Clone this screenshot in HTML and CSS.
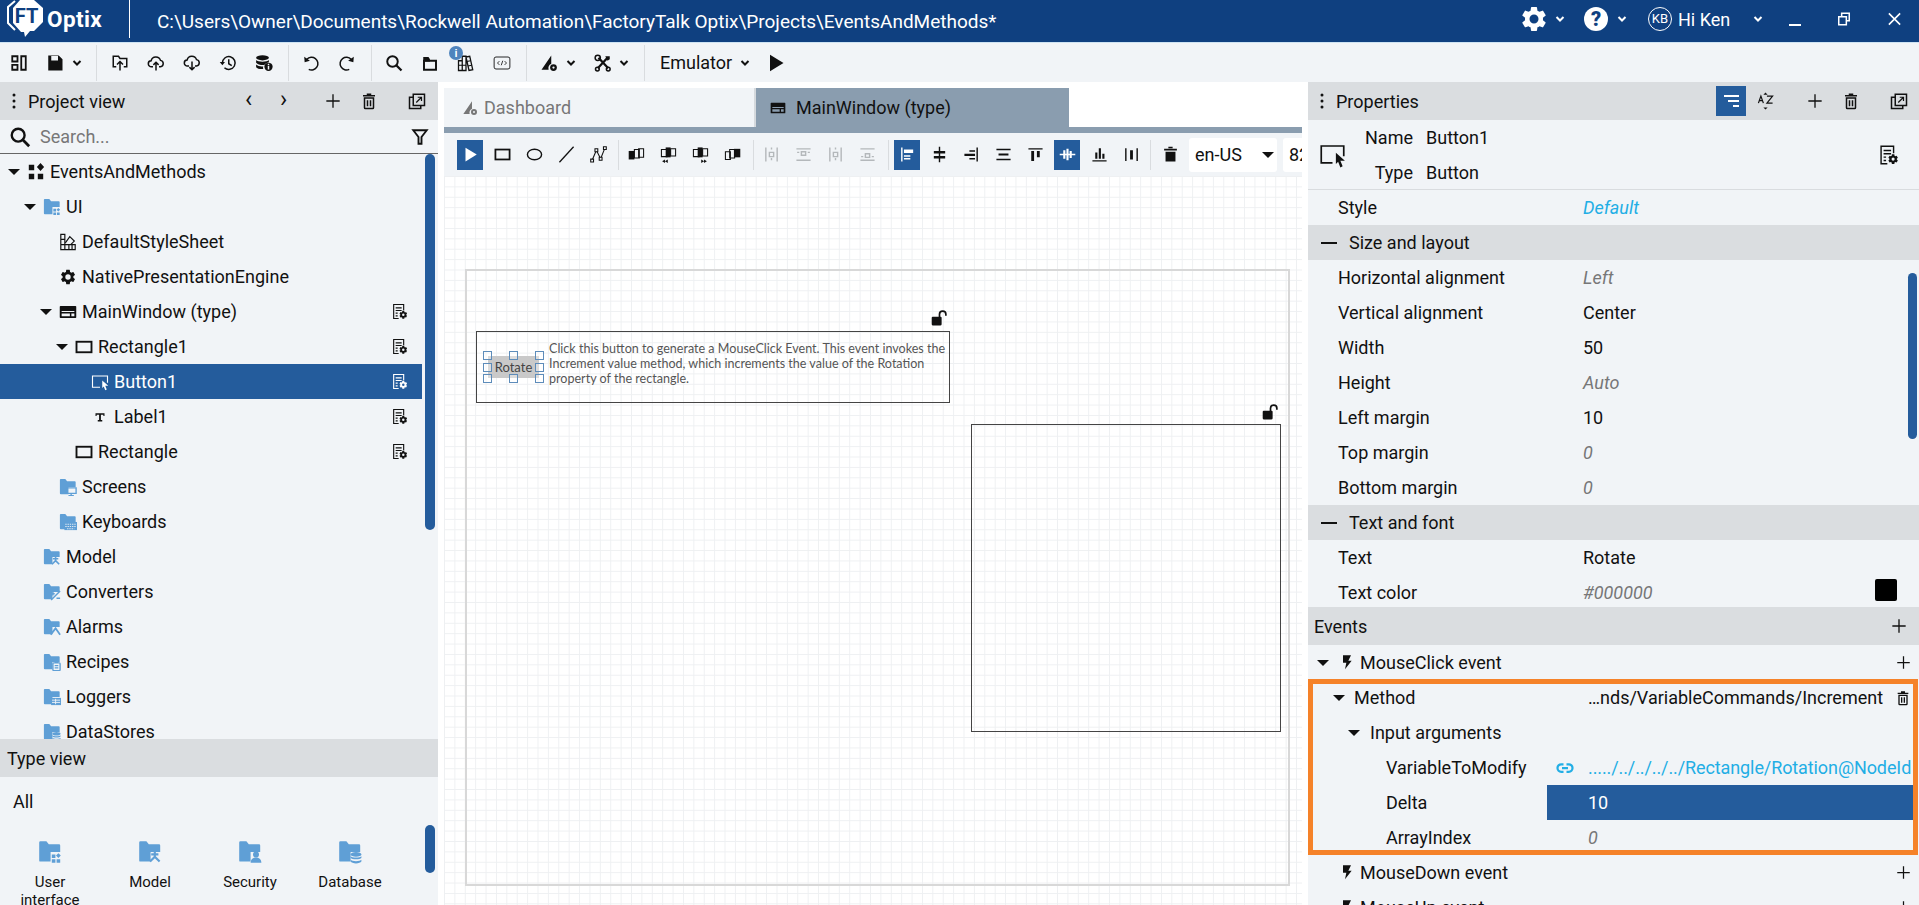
FILE: index.html
```html
<!DOCTYPE html>
<html lang="en">

<head>
    <meta charset="UTF-8">
    <meta name="viewport" content="width=device-width, initial-scale=1.0">
    <title>FactoryTalk Optix</title>
    <link rel="stylesheet" href="styles.css">
</head>

<body>
    <!-- Icon set -->
    <svg class="sprite" xmlns="http://www.w3.org/2000/svg">
        <symbol id="i-chev" viewBox="0 0 12 12"><path d="M2.5 4l3.5 3.5L9.5 4" fill="none" stroke="currentColor" stroke-width="2"/></symbol>
        <symbol id="i-gear" viewBox="0 0 24 24"><path fill="currentColor" fill-rule="evenodd" d="M19.14 12.94c.04-.3.06-.61.06-.94 0-.32-.02-.64-.07-.94l2.03-1.58a.49.49 0 0 0 .12-.61l-1.92-3.32a.488.488 0 0 0-.59-.22l-2.39.96c-.5-.38-1.03-.7-1.62-.94l-.36-2.54a.484.484 0 0 0-.48-.41h-3.84c-.24 0-.43.17-.47.41l-.36 2.54c-.59.24-1.13.57-1.62.94l-2.39-.96c-.22-.08-.47 0-.59.22L2.74 8.87c-.12.21-.08.47.12.61l2.03 1.58c-.05.3-.09.63-.09.94s.02.64.07.94l-2.03 1.58a.49.49 0 0 0-.12.61l1.92 3.32c.12.22.37.29.59.22l2.39-.96c.5.38 1.03.7 1.62.94l.36 2.54c.05.24.24.41.48.41h3.84c.24 0 .44-.17.47-.41l.36-2.54c.59-.24 1.13-.56 1.62-.94l2.39.96c.22.08.47 0 .59-.22l1.92-3.32c.12-.22.07-.47-.12-.61l-2.01-1.58zM12 15.6A3.6 3.6 0 1 1 12 8.4a3.6 3.6 0 0 1 0 7.2z"/></symbol>
        <symbol id="i-layout" viewBox="0 0 24 24"><path fill="none" stroke="currentColor" stroke-width="2.4" d="M3 3h7v7H3zM3 14.5h7V21H3zM15 3h6v18h-6z"/></symbol>
        <symbol id="i-save" viewBox="0 0 24 24"><path fill="currentColor" fill-rule="evenodd" d="M3 2h14l5 5v15H3zM7 2.500v6h9v-6z"/></symbol>
        <symbol id="i-folderup" viewBox="0 0 24 24"><path fill="none" stroke="currentColor" stroke-width="2" d="M7 17H3V3h7l2 3h9v11h-4"/><path fill="none" stroke="currentColor" stroke-width="2" d="M12 22V10M8 14l4-4 4 4"/></symbol>
        <symbol id="i-cloudup" viewBox="0 0 24 24"><path fill="none" stroke="currentColor" stroke-width="2" d="M8 17H6a4 4 0 0 1-.5-8A6.500 6.500 0 0 1 18 8.500a4.300 4.300 0 0 1 0 8.500h-2"/><path fill="none" stroke="currentColor" stroke-width="2" d="M12 22V11M8.500 14.500L12 11l3.500 3.500"/></symbol>
        <symbol id="i-clouddown" viewBox="0 0 24 24"><path fill="none" stroke="currentColor" stroke-width="2" d="M8 16H6a4 4 0 0 1-.5-8A6.500 6.500 0 0 1 18 7.500a4.300 4.300 0 0 1 0 8.500h-2"/><path fill="none" stroke="currentColor" stroke-width="2" d="M12 10v11M8.500 17.500L12 21l3.500-3.500"/></symbol>
        <symbol id="i-history" viewBox="0 0 24 24"><path fill="none" stroke="currentColor" stroke-width="2" d="M4.500 12a8.500 8.500 0 1 1 2.800 6.300M13 7v6l4 2.500"/><path fill="currentColor" d="M1 10.500h7L4.500 15z"/></symbol>
        <symbol id="i-dbinfo" viewBox="0 0 24 24"><ellipse cx="10" cy="5" rx="8.500" ry="3.500" fill="currentColor"/><path fill="currentColor" d="M1.500 8c2 3 15 3 17 0v3c-3 1-5 2-6 3.500-4 .5-9-.5-11-3zM1.500 14c2 2 6 3 9.500 2.500-.5 1-.5 2.500 0 3.500-4 .500-8-.5-9.500-2.500z"/><circle cx="18" cy="17" r="5.500" fill="currentColor"/><path stroke="#f1f4f7" stroke-width="2" d="M18 16v4.500M18 13v2"/></symbol>
        <symbol id="i-undo" viewBox="0 0 24 24"><path fill="none" stroke="currentColor" stroke-width="2" d="M6.500 7A8.500 8.500 0 1 1 9 20.500"/><path fill="currentColor" d="M3 3.500l.5 7.500 7-2z"/></symbol>
        <symbol id="i-redo" viewBox="0 0 24 24"><path fill="none" stroke="currentColor" stroke-width="2" d="M17.500 7A8.500 8.500 0 1 0 15 20.500"/><path fill="currentColor" d="M21 3.500l-.5 7.500-7-2z"/></symbol>
        <symbol id="i-search" viewBox="0 0 24 24"><circle cx="10" cy="10" r="7" fill="none" stroke="currentColor" stroke-width="2.600"/><path d="M15 15l7 7" stroke="currentColor" stroke-width="3"/></symbol>
        <symbol id="i-folder" viewBox="0 0 24 24"><path fill="none" stroke="currentColor" stroke-width="2.600" d="M4 21V9h16v12z"/><path fill="currentColor" d="M3 10V4h7l2 3v3z"/></symbol>
        <symbol id="i-books" viewBox="0 0 24 24"><path fill="none" stroke="currentColor" stroke-width="1.700" d="M2 9h5v13H2zM7 3h5v19H7zM12 4l5-1 4 18-5 1z"/><path stroke="currentColor" stroke-width="1.500" d="M2 15h10M13 10l5-1M14.500 16l5-1"/></symbol>
        <symbol id="i-code" viewBox="0 0 24 24"><rect x="1.500" y="4" width="21" height="16" rx="2.500" fill="none" stroke="currentColor" stroke-width="1.200"/><path fill="none" stroke="currentColor" stroke-width="1.100" d="M8.500 9.500L6 12l2.500 2.500M15.500 9.500L18 12l-2.500 2.500M13 9l-2 6"/></symbol>
        <symbol id="i-dash" viewBox="0 0 24 24"><path fill="currentColor" d="M15 2v11a7 7 0 0 0-3.500 8H2z"/><circle cx="18" cy="18" r="4.500" fill="currentColor"/><circle cx="18" cy="18" r="1.500" fill="#f1f4f7"/></symbol>
        <symbol id="i-tools" viewBox="0 0 24 24"><path stroke="currentColor" stroke-width="3" d="M6 5l13 14M18 5L5 19"/><circle cx="5" cy="5" r="3.500" fill="none" stroke="currentColor" stroke-width="2"/><circle cx="19" cy="20" r="2.500" fill="none" stroke="currentColor" stroke-width="2"/><circle cx="4.500" cy="20" r="2.500" fill="none" stroke="currentColor" stroke-width="2"/><path fill="currentColor" d="M15 3h6v4l-3 2z"/></symbol>
        <symbol id="i-play" viewBox="0 0 24 24"><path fill="currentColor" d="M4 1l18 11L4 23z"/></symbol>
        <symbol id="i-dots" viewBox="0 0 6 24"><g fill="currentColor"><circle cx="3" cy="4" r="2"/><circle cx="3" cy="12" r="2"/><circle cx="3" cy="20" r="2"/></g></symbol>
        <symbol id="i-plus" viewBox="0 0 24 24"><path stroke="currentColor" stroke-width="2" d="M12 2v20M2 12h20"/></symbol>
        <symbol id="i-trash" viewBox="0 0 24 24"><path fill="none" stroke="currentColor" stroke-width="2" d="M6 8h12v13a1 1 0 0 1-1 1H7a1 1 0 0 1-1-1z"/><path stroke="currentColor" stroke-width="2" d="M4 5h16M9 3h6M10 11v8M14 11v8"/></symbol>
        <symbol id="i-bin" viewBox="0 0 24 24"><path fill="currentColor" d="M5 8h14v14H5zM3 4h18v2.500H3zM9 1h6v2H9z"/></symbol>
        <symbol id="i-copy" viewBox="0 0 24 24"><path fill="none" stroke="currentColor" stroke-width="2" d="M7 3h15v15H7zM7 7H2v15h15v-4"/><path fill="none" stroke="currentColor" stroke-width="1.600" d="M11 14l7-7M13 7h5v5"/></symbol>
        <symbol id="i-docgear" viewBox="0 0 24 24"><path fill="none" stroke="currentColor" stroke-width="1.700" d="M10 22.500H2.500V1.500h15V10"/><path stroke="currentColor" stroke-width="1.700" d="M5.500 6.500h9M5.500 10.500h9M5.500 14.500h3M5.500 18.500h3"/><g transform="translate(9.500 9.500) scale(.62)"><path fill="currentColor" fill-rule="evenodd" d="M19.140 12.940c.04-.3.06-.61.06-.94 0-.32-.02-.64-.07-.94l2.030-1.580-2.400-4.150-2.390.96c-.5-.38-1.030-.7-1.620-.94l-.36-2.950H9.600l-.36 2.950c-.59.24-1.130.57-1.620.94l-2.390-.96-2.400 4.150 2.030 1.580c-.05.3-.09.63-.09.94s.02.64.07.94l-2.030 1.580 2.400 4.150 2.390-.96c.5.38 1.030.7 1.620.94l.36 2.950h4.800l.36-2.950c.59-.24 1.130-.56 1.620-.94l2.390.96 2.400-4.150zM12 15a3 3 0 1 1 0-6 3 3 0 0 1 0 6z"/></g></symbol>
        <symbol id="i-project" viewBox="0 0 20 20"><path fill="currentColor" d="M2 2h6v6H2zM2 12h6v6H2zM12 12h6v6h-6zM15 0l4 4.500-4 4.500-4-4.500z"/></symbol>
        <symbol id="i-sheet" viewBox="0 0 20 20"><path fill="none" stroke="currentColor" stroke-width="1.300" d="M2 1.500h4.500v17H2zM2 7h4.500M2 13h16v5.500H2zM11 13v5.500M14.500 13v5.500"/><path fill="none" stroke="currentColor" stroke-width="1.300" d="M7 11l5-7 5 5-4 4"/></symbol>
        <symbol id="i-window" viewBox="0 0 24 24"><path fill="currentColor" fill-rule="evenodd" d="M1 5a1 1 0 0 1 1-1h20a1 1 0 0 1 1 1v14a1 1 0 0 1-1 1H2a1 1 0 0 1-1-1zM3.500 10.500V12h17v-1.500zM3.500 14v3.500h11V14zM16.500 14v3.500h4V14z"/></symbol>
        <symbol id="i-rect" viewBox="0 0 24 24"><rect x="2" y="5" width="20" height="14" fill="none" stroke="currentColor" stroke-width="2.500"/></symbol>
        <symbol id="i-button" viewBox="0 0 24 24"><path fill="none" stroke="currentColor" stroke-width="1.500" d="M12 19H2V4h20v9"/><path fill="currentColor" d="M15 10l8 7h-4l2 5-2 1-2-5-2 2z"/></symbol>
        <symbol id="i-t" viewBox="0 0 24 24"><path fill="currentColor" d="M6 7h12v3.500h-1.500V9h-3.300v7H15v2H9v-2h1.800V9H7.500v1.500H6z"/></symbol>
        <symbol id="i-caret" viewBox="0 0 12 6"><path fill="currentColor" d="M0 0h12L6 6z"/></symbol>
        <symbol id="i-funnel" viewBox="0 0 24 24"><path fill="none" stroke="currentColor" stroke-width="2.500" d="M3 3h18l-7 9v9h-4v-9z"/></symbol>
        <symbol id="i-az" viewBox="0 0 24 24"><path fill="none" stroke="currentColor" stroke-width="1.700" d="M2 15l3.500-10L9 15M3.200 11.500h4.600M14 5h8l-8 10h8"/><path fill="currentColor" d="M12 0l3 3H9zM12 24l-3-3h6z"/></symbol>
        <symbol id="i-ellipse" viewBox="0 0 24 24"><ellipse cx="12" cy="12" rx="10" ry="7.500" fill="none" stroke="currentColor" stroke-width="2"/></symbol>
        <symbol id="i-line" viewBox="0 0 24 24"><path stroke="currentColor" stroke-width="1.800" d="M2 23L22 1"/></symbol>
        <symbol id="i-poly" viewBox="0 0 24 24"><path fill="none" stroke="currentColor" stroke-width="1.500" d="M3 20L9 6l6 12 6-15"/><path fill="#f1f4f7" stroke="currentColor" stroke-width="1.500" d="M1 18.500h4v4H1zM7 4h4v4H7zM13 16h4v4h-4zM19 1h4v4h-4z"/></symbol>
        <symbol id="i-arrange" viewBox="0 0 24 24"><path fill="currentColor" d="M1 7h8v12H1z"/><path fill="none" stroke="currentColor" stroke-width="1.500" d="M9 5h7v12H9zM15 4h7v12h-7z"/></symbol>
        <symbol id="i-arrangeb" viewBox="0 0 24 24"><path fill="none" stroke="currentColor" stroke-width="1.500" d="M2 5h8v10H2z"/><path fill="currentColor" d="M8 2h7v14H8z"/><path fill="none" stroke="currentColor" stroke-width="1.500" d="M15 4h7v10h-7z"/><path fill="currentColor" d="M11 19v5l-4-2.500zM7 19v5l-4-2.500z"/></symbol>
        <symbol id="i-arrangef" viewBox="0 0 24 24"><path fill="none" stroke="currentColor" stroke-width="1.500" d="M2 5h8v10H2z"/><path fill="currentColor" d="M8 2h7v14H8z"/><path fill="none" stroke="currentColor" stroke-width="1.500" d="M15 4h7v10h-7z"/><path fill="currentColor" d="M13 19v5l4-2.500zM17 19v5l4-2.500z"/></symbol>
        <symbol id="i-arrangel" viewBox="0 0 24 24"><path fill="none" stroke="currentColor" stroke-width="1.500" d="M2 8h7v11H2zM8 5h7v12H8z"/><path fill="currentColor" d="M14 4h9v12h-9z"/></symbol>
        <symbol id="i-dista" viewBox="0 0 24 24"><path fill="currentColor" d="M3 2h2v20H3zM19 2h2v20h-2z"/><path fill="none" stroke="currentColor" stroke-width="2" d="M9 9h6v6H9z"/><path stroke="currentColor" stroke-width="2" stroke-dasharray="3 2" d="M12 2v5M12 17v5"/></symbol>
        <symbol id="i-distb" viewBox="0 0 24 24"><path fill="currentColor" d="M2 3h20v2H2zM2 19h20v2H2z"/><path fill="none" stroke="currentColor" stroke-width="2" d="M9 8h6v5H9z"/><path stroke="currentColor" stroke-width="2" d="M3 9h3M18 9h3"/></symbol>
        <symbol id="i-distd" viewBox="0 0 24 24"><path fill="currentColor" d="M2 19h20v2H2zM2 3h20v2H2z"/><path fill="none" stroke="currentColor" stroke-width="2" d="M9 11h6v5H9z"/><path stroke="currentColor" stroke-width="2" d="M3 15h3M18 15h3"/></symbol>
        <symbol id="i-alleft" viewBox="0 0 24 24"><path fill="currentColor" d="M3 2h2v20H3zM7 5h13v5H7zM7 13h9v2H7zM7 17h9v2H7z"/></symbol>
        <symbol id="i-alcenter" viewBox="0 0 24 24"><path fill="currentColor" d="M11 1h2v22h-2zM4 7h16v3.500H4zM4 14h16v3.500H4z"/></symbol>
        <symbol id="i-alright" viewBox="0 0 24 24"><path fill="currentColor" d="M19 2h2v20h-2zM9 6h8v2H9zM2 11h15v3H2zM9 17h8v2H9z"/></symbol>
        <symbol id="i-almid" viewBox="0 0 24 24"><path fill="currentColor" d="M2 4h20v2H2zM2 18h20v2H2zM5 10.500h14v3H5z"/></symbol>
        <symbol id="i-altop" viewBox="0 0 24 24"><path fill="currentColor" d="M2 3h20v2H2zM6 7h4v14H6zM14 7h4v9h-4z"/></symbol>
        <symbol id="i-alvcenter" viewBox="0 0 24 24"><path fill="currentColor" d="M1 11h22v2H1zM6 6h3v12H6zM10.500 4h3v16h-3zM15 7h3v10h-3z"/></symbol>
        <symbol id="i-albottom" viewBox="0 0 24 24"><path fill="currentColor" d="M2 20h20v2H2zM6 9h3v9H6zM11 3h3v15h-3zM16 11h3v7h-3z"/></symbol>
        <symbol id="i-alsides" viewBox="0 0 24 24"><path fill="currentColor" d="M3 3h2v18H3zM19 3h2v18h-2zM10 6h4v13h-4z"/></symbol>
        <symbol id="i-lock" viewBox="0 0 24 24"><path fill="currentColor" d="M1 11a1.500 1.500 0 0 1 1.500-1.500h11a1.500 1.500 0 0 1 1.500 1.500v9a2 2 0 0 1-2 2H3a2 2 0 0 1-2-2z"/><path fill="none" stroke="currentColor" stroke-width="2.400" d="M12 10V6a4.500 4.500 0 0 1 9 0v2"/></symbol>
        <symbol id="i-bolt" viewBox="0 0 24 24"><path fill="currentColor" d="M6 2h12l-4 8h5L9 23l2-10H6z"/></symbol>
        <symbol id="i-link" viewBox="0 0 24 24"><path fill="none" stroke="currentColor" stroke-width="3" d="M10 7H7a5 5 0 0 0 0 10h3M14 7h3a5 5 0 0 1 0 10h-3M8 12h8"/></symbol>
        <symbol id="i-restore" viewBox="0 0 24 24"><path fill="none" stroke="currentColor" stroke-width="2.600" d="M8 7V2h13v13h-5M3 8h13v14H3z"/></symbol>
        <symbol id="i-close" viewBox="0 0 24 24"><path stroke="currentColor" stroke-width="2.600" d="M3 3l18 18M21 3L3 21"/></symbol>
        <symbol id="i-fbase" viewBox="0 0 20 20"><path fill="#5f9fd6" d="M1 2a1 1 0 0 1 1-1h5l2 2.500h8.500a1 1 0 0 1 1 1V10h-8v8H2a1 1 0 0 1-1-1z"/></symbol>
        <symbol id="f-ui" viewBox="0 0 20 20"><use href="#i-fbase"/><path fill="#5f9fd6" d="M11.500 12h3v3h-3zM11.500 16h3v3h-3zM15.500 16h3v3h-3zM17 11l2 2-2 2-2-2z"/></symbol>
        <symbol id="f-screen" viewBox="0 0 20 20"><use href="#i-fbase"/><path fill="none" stroke="#5f9fd6" stroke-width="1.500" d="M8 11h11v6H8z"/><path stroke="#5f9fd6" stroke-width="1.500" d="M13.500 17v2M10.500 19.500h6"/></symbol>
        <symbol id="f-kbd" viewBox="0 0 20 20"><use href="#i-fbase"/><rect x="6" y="10" width="14" height="9" fill="#5f9fd6"/><path stroke="#f1f4f7" stroke-width="1" stroke-dasharray="1.500 1" d="M7 12.500h12M7 15h12M9 17.500h8"/></symbol>
        <symbol id="f-model" viewBox="0 0 20 20"><use href="#i-fbase"/><path fill="none" stroke="#5f9fd6" stroke-width="1.800" d="M14 9v5l-4 4M14 14l4 4M11 12h6"/></symbol>
        <symbol id="f-conv" viewBox="0 0 20 20"><use href="#i-fbase"/><path stroke="#5f9fd6" stroke-width="1.600" d="M9 19l10-10M9 12h4M11 10v4M15 17h4"/></symbol>
        <symbol id="f-alarm" viewBox="0 0 20 20"><use href="#i-fbase"/><path fill="none" stroke="#5f9fd6" stroke-width="2" d="M8.500 18.500l5.500-7 5 7"/></symbol>
        <symbol id="f-recipe" viewBox="0 0 20 20"><use href="#i-fbase"/><rect x="11" y="11" width="8" height="8.500" rx="1" fill="none" stroke="#5f9fd6" stroke-width="1.500"/><path stroke="#5f9fd6" stroke-width="1.200" d="M13 14h4M13 16.500h4M13 10.500h4"/></symbol>
        <symbol id="f-log" viewBox="0 0 20 20"><use href="#i-fbase"/><rect x="9" y="11" width="11" height="8" fill="#5f9fd6"/><path stroke="#f1f4f7" stroke-width="1" d="M10 13.500h9M10 16h9M14 12v6"/></symbol>
        <symbol id="f-db" viewBox="0 0 20 20"><use href="#i-fbase"/><ellipse cx="15" cy="12" rx="4.500" ry="2" fill="#5f9fd6"/><path fill="#5f9fd6" d="M10.500 13.500c1 1.500 8 1.500 9 0V15c-1 1.500-8 1.500-9 0zM10.500 16.500c1 1.500 8 1.500 9 0V18c-1 2-8 2-9 0z"/></symbol>
        <symbol id="f-sec" viewBox="0 0 20 20"><use href="#i-fbase"/><circle cx="15" cy="12" r="2.500" fill="#5f9fd6"/><path fill="#5f9fd6" d="M10.500 19c0-6 9-6 9 0z"/></symbol>
    </svg>

    <!-- Title bar -->
    <header class="titlebar">
        <div class="logo">
            <svg class="logo-mark" width="44" height="42" viewBox="0 0 44 42"><path fill="none" stroke="#fff" stroke-width="2" d="M12 1L5 7v16l7 7"/><path fill="#fff" d="M17 0h14l9 8v14l-9 9-1 0-3 0-5 6-1-5h-3l-8-9V8z"/><text x="23.500" y="23" text-anchor="middle" class="logo-ft">FT</text></svg>
            <span class="logo-text">Optix</span>
        </div>
        <div class="path">C:\Users\Owner\Documents\Rockwell Automation\FactoryTalk Optix\Projects\EventsAndMethods*</div>
        <div class="title-right">
            <svg class="ti gear"><use href="#i-gear"/></svg>
            <svg class="chev"><use href="#i-chev"/></svg>
            <span class="help">?</span>
            <svg class="chev"><use href="#i-chev"/></svg>
            <span class="avatar">KB</span>
            <span class="hi">Hi Ken</span>
            <svg class="chev user-chev"><use href="#i-chev"/></svg>
            <span class="minimize"></span>
            <svg class="ti restore"><use href="#i-restore"/></svg>
            <svg class="ti close"><use href="#i-close"/></svg>
        </div>
    </header>

    <!-- Main toolbar -->
    <nav class="toolbar">
        <button class="tb"><svg><use href="#i-layout"/></svg></button>
        <button class="tb"><svg><use href="#i-save"/></svg></button>
        <svg class="chev chev-save"><use href="#i-chev"/></svg>
        <span class="sep sep-a"></span>
        <button class="tb"><svg><use href="#i-folderup"/></svg></button>
        <button class="tb"><svg><use href="#i-cloudup"/></svg></button>
        <button class="tb"><svg><use href="#i-clouddown"/></svg></button>
        <button class="tb"><svg><use href="#i-history"/></svg></button>
        <button class="tb"><svg><use href="#i-dbinfo"/></svg></button>
        <span class="sep sep-b"></span>
        <button class="tb"><svg><use href="#i-undo"/></svg></button>
        <button class="tb"><svg><use href="#i-redo"/></svg></button>
        <span class="sep sep-b"></span>
        <button class="tb"><svg><use href="#i-search"/></svg></button>
        <button class="tb"><svg><use href="#i-folder"/></svg></button>
        <button class="tb tb-badge"><svg><use href="#i-books"/></svg><span class="badge">i</span></button>
        <button class="tb"><svg><use href="#i-code"/></svg></button>
        <span class="sep sep-b"></span>
        <button class="tb"><svg><use href="#i-dash"/></svg></button>
        <svg class="chev chev-save"><use href="#i-chev"/></svg>
        <button class="tb tb-gap"><svg><use href="#i-tools"/></svg></button>
        <svg class="chev chev-tools"><use href="#i-chev"/></svg>
        <span class="sep sep-e"></span>
        <span class="emulator">Emulator</span>
        <svg class="chev chev-emu"><use href="#i-chev"/></svg>
        <svg class="play"><use href="#i-play"/></svg>
    </nav>

    <main class="workspace">
        <!-- Left panels -->
        <aside class="left">
            <div class="panel-head">
                <svg class="dots"><use href="#i-dots"/></svg>
                <span class="panel-title">Project view</span>
                <span class="nav-arrow nav-prev">&#8249;</span>
                <span class="nav-arrow nav-next">&#8250;</span>
                <svg class="hi-plus"><use href="#i-plus"/></svg>
                <svg class="hi-trash"><use href="#i-trash"/></svg>
                <svg class="hi-copy"><use href="#i-copy"/></svg>
            </div>
            <div class="search">
                <svg class="search-icon"><use href="#i-search"/></svg>
                <span class="search-text">Search...</span>
                <svg class="funnel"><use href="#i-funnel"/></svg>
            </div>
            <div class="tree-wrap">
                <ul class="tree">
                    <li class="row l0"><svg class="arrow"><use href="#i-caret"/></svg><svg class="node"><use href="#i-project"/></svg><span>EventsAndMethods</span></li>
                    <li class="row l1"><svg class="arrow"><use href="#i-caret"/></svg><svg class="node"><use href="#f-ui"/></svg><span>UI</span></li>
                    <li class="row l2"><i class="noarrow"></i><svg class="node"><use href="#i-sheet"/></svg><span>DefaultStyleSheet</span></li>
                    <li class="row l2"><i class="noarrow"></i><svg class="node"><use href="#i-gear"/></svg><span>NativePresentationEngine</span></li>
                    <li class="row l2"><svg class="arrow"><use href="#i-caret"/></svg><svg class="node"><use href="#i-window"/></svg><span>MainWindow (type)</span><svg class="row-act"><use href="#i-docgear"/></svg></li>
                    <li class="row l3"><svg class="arrow"><use href="#i-caret"/></svg><svg class="node"><use href="#i-rect"/></svg><span>Rectangle1</span><svg class="row-act"><use href="#i-docgear"/></svg></li>
                    <li class="row l4 selected"><i class="noarrow"></i><svg class="node"><use href="#i-button"/></svg><span>Button1</span><svg class="row-act"><use href="#i-docgear"/></svg></li>
                    <li class="row l4"><i class="noarrow"></i><svg class="node"><use href="#i-t"/></svg><span>Label1</span><svg class="row-act"><use href="#i-docgear"/></svg></li>
                    <li class="row l3"><i class="noarrow"></i><svg class="node"><use href="#i-rect"/></svg><span>Rectangle</span><svg class="row-act"><use href="#i-docgear"/></svg></li>
                    <li class="row l2"><i class="noarrow"></i><svg class="node"><use href="#f-screen"/></svg><span>Screens</span></li>
                    <li class="row l2"><i class="noarrow"></i><svg class="node"><use href="#f-kbd"/></svg><span>Keyboards</span></li>
                    <li class="row l1"><i class="noarrow"></i><svg class="node"><use href="#f-model"/></svg><span>Model</span></li>
                    <li class="row l1"><i class="noarrow"></i><svg class="node"><use href="#f-conv"/></svg><span>Converters</span></li>
                    <li class="row l1"><i class="noarrow"></i><svg class="node"><use href="#f-alarm"/></svg><span>Alarms</span></li>
                    <li class="row l1"><i class="noarrow"></i><svg class="node"><use href="#f-recipe"/></svg><span>Recipes</span></li>
                    <li class="row l1"><i class="noarrow"></i><svg class="node"><use href="#f-log"/></svg><span>Loggers</span></li>
                    <li class="row l1"><i class="noarrow"></i><svg class="node"><use href="#f-db"/></svg><span>DataStores</span></li>
                </ul>
                <div class="thumb tree-thumb"></div>
            </div>
            <div class="panel-head type-head"><span>Type view</span></div>
            <div class="type-all">All</div>
            <div class="types">
                <div class="type"><svg><use href="#f-ui"/></svg><span>User interface</span></div>
                <div class="type"><svg><use href="#f-model"/></svg><span>Model</span></div>
                <div class="type"><svg><use href="#f-sec"/></svg><span>Security</span></div>
                <div class="type"><svg><use href="#f-db"/></svg><span>Database</span></div>
                <div class="thumb type-thumb"></div>
            </div>
        </aside>

        <!-- Editor -->
        <section class="editor">
            <div class="tabs">
                <div class="tab"><svg><use href="#i-dash"/></svg><span>Dashboard</span></div>
                <div class="tab active"><svg><use href="#i-window"/></svg><span>MainWindow (type)</span></div>
            </div>
            <div class="edit-tools">
                <button class="et on first"><svg class="pointer"><use href="#i-play"/></svg></button>
                <button class="et"><svg><use href="#i-rect"/></svg></button>
                <button class="et"><svg><use href="#i-ellipse"/></svg></button>
                <button class="et"><svg><use href="#i-line"/></svg></button>
                <button class="et"><svg><use href="#i-poly"/></svg></button>
                <span class="et-sep es1"></span>
                <button class="et"><svg><use href="#i-arrange"/></svg></button>
                <button class="et"><svg><use href="#i-arrangeb"/></svg></button>
                <button class="et"><svg><use href="#i-arrangef"/></svg></button>
                <button class="et"><svg><use href="#i-arrangel"/></svg></button>
                <span class="et-sep es2"></span>
                <button class="et off"><svg><use href="#i-dista"/></svg></button>
                <button class="et off"><svg><use href="#i-distb"/></svg></button>
                <button class="et off"><svg><use href="#i-dista"/></svg></button>
                <button class="et off"><svg><use href="#i-distd"/></svg></button>
                <span class="et-sep es3"></span>
                <button class="et on"><svg><use href="#i-alleft"/></svg></button>
                <button class="et"><svg><use href="#i-alcenter"/></svg></button>
                <button class="et"><svg><use href="#i-alright"/></svg></button>
                <button class="et"><svg><use href="#i-almid"/></svg></button>
                <button class="et"><svg><use href="#i-altop"/></svg></button>
                <button class="et on"><svg><use href="#i-alvcenter"/></svg></button>
                <button class="et"><svg><use href="#i-albottom"/></svg></button>
                <button class="et"><svg><use href="#i-alsides"/></svg></button>
                <span class="et-sep es4"></span>
                <button class="et"><svg><use href="#i-bin"/></svg></button>
                <div class="select lang"><span>en-US</span><svg class="sel-caret"><use href="#i-caret"/></svg></div>
                <div class="select zoom"><span>82%</span></div>
            </div>

            <!-- Design canvas: items sit at their place on the free canvas -->
            <div class="canvas">
                <div class="frame"></div>
                <div class="shape shape-main"></div>
                <svg class="lock lock-a"><use href="#i-lock"/></svg>
                <div class="widget-btn">Rotate</div>
                <i class="handle h1"></i><i class="handle h2"></i><i class="handle h3"></i><i class="handle h4"></i>
                <i class="handle h5"></i><i class="handle h6"></i><i class="handle h7"></i><i class="handle h8"></i>
                <p class="widget-label">Click this button to generate a MouseClick Event. This event invokes the Increment value method, which increments the value of the Rotation property of the rectangle.</p>
                <div class="shape shape-rot"></div>
                <svg class="lock lock-b"><use href="#i-lock"/></svg>
            </div>
        </section>

        <!-- Properties -->
        <aside class="props">
            <div class="panel-head">
                <svg class="dots"><use href="#i-dots"/></svg>
                <span class="panel-title">Properties</span>
                <span class="sort-on"><i></i><i></i><i></i></span>
                <svg class="pi-az"><use href="#i-az"/></svg>
                <svg class="pi-plus"><use href="#i-plus"/></svg>
                <svg class="pi-trash"><use href="#i-trash"/></svg>
                <svg class="pi-copy"><use href="#i-copy"/></svg>
            </div>
            <div class="identity">
                <svg class="id-icon"><use href="#i-button"/></svg>
                <div class="id-names">
                    <div><span class="id-key">Name</span><span>Button1</span></div>
                    <div><span class="id-key">Type</span><span>Button</span></div>
                </div>
                <svg class="id-act"><use href="#i-docgear"/></svg>
            </div>
            <div class="prop"><span class="key">Style</span><span class="val link it">Default</span></div>
            <div class="group"><i class="dash"></i><span>Size and layout</span></div>
            <div class="prop"><span class="key">Horizontal alignment</span><span class="val it">Left</span></div>
            <div class="prop"><span class="key">Vertical alignment</span><span class="val">Center</span></div>
            <div class="prop"><span class="key">Width</span><span class="val">50</span></div>
            <div class="prop"><span class="key">Height</span><span class="val it">Auto</span></div>
            <div class="prop"><span class="key">Left margin</span><span class="val">10</span></div>
            <div class="prop"><span class="key">Top margin</span><span class="val it">0</span></div>
            <div class="prop"><span class="key">Bottom margin</span><span class="val it">0</span></div>
            <div class="group"><i class="dash"></i><span>Text and font</span></div>
            <div class="prop"><span class="key">Text</span><span class="val">Rotate</span></div>
            <div class="prop prop-cut"><span class="key">Text color</span><span class="val it">#000000</span><i class="swatch"></i></div>
            <div class="events-head"><span>Events</span><svg><use href="#i-plus"/></svg></div>
            <div class="ev"><svg class="arrow ev-a1"><use href="#i-caret"/></svg><svg class="bolt"><use href="#i-bolt"/></svg><span>MouseClick event</span><svg class="ev-plus"><use href="#i-plus"/></svg></div>
            <div class="method-box">
                <div class="ev m1"><svg class="arrow"><use href="#i-caret"/></svg><span>Method</span><span class="ev-val">…nds/VariableCommands/Increment</span><svg class="ev-trash"><use href="#i-trash"/></svg></div>
                <div class="ev m2"><svg class="arrow"><use href="#i-caret"/></svg><span>Input arguments</span></div>
                <div class="ev m3"><span>VariableToModify</span><svg class="ev-link"><use href="#i-link"/></svg><span class="ev-val link ev-clip">...../../../../../Rectangle/Rotation@NodeId</span></div>
                <div class="ev m3"><span>Delta</span><span class="ev-val delta">10</span></div>
                <div class="ev m3"><span>ArrayIndex</span><span class="ev-val it">0</span></div>
            </div>
            <div class="ev"><svg class="bolt bolt-solo"><use href="#i-bolt"/></svg><span>MouseDown event</span><svg class="ev-plus"><use href="#i-plus"/></svg></div>
            <div class="ev"><svg class="bolt bolt-solo"><use href="#i-bolt"/></svg><span>MouseUp event</span><svg class="ev-plus"><use href="#i-plus"/></svg></div>
            <div class="thumb prop-thumb"></div>
        </aside>
    </main>
</body>

</html>
```

FILE: styles.css
```css
* {
    box-sizing: border-box;
}

html, body {
    margin: 0;
    height: 905px;
    overflow: hidden;
}

body {
    font-family: Roboto, "Liberation Sans", sans-serif;
    font-size: 18px;
    color: #111;
    background: #fff;
}

.sprite {
    display: none;
}

svg {
    flex: none;
    display: block;
}

button {
    border: none;
    background: none;
    padding: 0;
    color: inherit;
}

/* Title bar */
.titlebar {
    height: 43px;
    background: #0f4080;
    border-bottom: 1px solid #cfe4f3;
    color: #fff;
    display: flex;
    align-items: center;
}

.logo {
    width: 130px;
    height: 38px;
    margin-top: -4px;
    border-right: 1px solid #fff;
    display: flex;
    align-items: center;
    padding-left: 3px;
}

.logo-mark {
    margin-top: 4px;
}

.logo-ft {
    font: bold 20px Roboto, sans-serif;
    fill: #0f4080;
}

.logo-text {
    font-weight: 700;
    font-size: 22.500px;
    letter-spacing: .4px;
}

.path {
    margin-left: 27px;
    font-size: 19px;
    white-space: nowrap;
}

.title-right {
    margin-left: auto;
    display: flex;
    align-items: center;
    height: 100%;
    margin-top: -4px;
}

.ti {
    width: 26px;
    height: 26px;
}

.chev {
    width: 12px;
    height: 12px;
}

.gear {
    width: 30px;
    height: 30px;
    margin-left: -2px;
    margin-right: 5px;
}

.help {
    width: 24px;
    height: 24px;
    border-radius: 50%;
    background: #fff;
    color: #0f4080;
    font-weight: 900;
    font-size: 20px;
    line-height: 24px;
    text-align: center;
    margin: 0 8px 0 18px;
}

.avatar {
    width: 24px;
    height: 24px;
    margin-left: 20px;
    border: 1px solid #fff;
    border-radius: 50%;
    font-size: 13px;
    line-height: 22px;
    text-align: center;
}

.hi {
    margin-left: 6px;
    font-size: 18px;
    width: 52px;
    white-space: nowrap;
}

.user-chev {
    margin-left: 22px;
}

.minimize {
    width: 12px;
    height: 2px;
    background: #fff;
    margin: 12px 0 0 25px;
}

.restore {
    width: 14px;
    height: 16px;
    margin-left: 36px;
}

.close {
    width: 15px;
    height: 16px;
    margin: 0 17px 0 36px;
}

/* Main toolbar */
.toolbar {
    height: 39px;
    background: #f1f4f7;
    display: flex;
    align-items: center;
    padding-left: 1px;
}

.tb {
    width: 36px;
    height: 24px;
    display: flex;
    justify-content: center;
    align-items: center;
    position: relative;
    color: #111;
}

.tb svg {
    width: 18px;
    height: 18px;
}

.sep {
    width: 1px;
    height: 36px;
    background: #d9dcdf;
}

.chev-save {
    margin-left: -2px;
}

.sep-a {
    margin: 0 5px 0 13px;
}

.sep-b {
    margin: 0 4px 0 6px;
}

.sep-e {
    margin: 0 0 0 14px;
}

.tb-gap {
    margin-left: 8px;
}

.chev-tools {
    margin-left: -3px;
}

.badge {
    position: absolute;
    left: 1px;
    top: -5px;
    width: 14px;
    height: 14px;
    border-radius: 50%;
    background: #4f84bd;
    color: #fff;
    font-size: 11px;
    font-weight: 700;
    line-height: 14px;
    text-align: center;
}

.emulator {
    margin-left: 15px;
    font-size: 18px;
}

.chev-emu {
    margin-left: 7px;
}

.play {
    width: 18px;
    height: 18px;
    margin-left: 16px;
}

/* Layout */
.workspace {
    height: 823px;
    display: flex;
}

.left {
    width: 438px;
    flex: none;
    background: #f1f4f7;
    display: flex;
    flex-direction: column;
    overflow: hidden;
}

.panel-head {
    height: 38px;
    flex: none;
    background: #dadde0;
    display: flex;
    align-items: center;
    position: relative;
}

.dots {
    width: 6px;
    height: 18px;
    margin-left: 11px;
}

.panel-title {
    margin-left: 11px;
}

.nav-arrow {
    position: absolute;
    font-size: 24px;
    line-height: 38px;
    top: -2px;
}

.nav-prev {
    left: 245px;
}

.nav-next {
    left: 280px;
}

.hi-plus, .pi-plus {
    position: absolute;
    width: 16px;
    height: 16px;
    top: 11px;
    left: 325px;
}

.hi-trash, .pi-trash {
    position: absolute;
    width: 18px;
    height: 20px;
    top: 9px;
    left: 360px;
}

.hi-copy, .pi-copy {
    position: absolute;
    width: 18px;
    height: 18px;
    top: 10px;
    left: 408px;
}

.search {
    height: 34px;
    flex: none;
    border-bottom: 1px solid #666;
    display: flex;
    align-items: center;
    position: relative;
}

.search-icon {
    width: 22px;
    height: 22px;
    margin-left: 9px;
}

.search-text {
    margin-left: 9px;
    color: #777;
}

.funnel {
    width: 18px;
    height: 18px;
    margin-left: auto;
    margin-right: 9px;
}

.tree-wrap {
    height: 585px;
    flex: none;
    position: relative;
    overflow: hidden;
}

.tree {
    list-style: none;
    margin: 0;
    padding: 0;
    width: 422px;
}

.row {
    height: 35px;
    display: flex;
    align-items: center;
    position: relative;
    white-space: nowrap;
}

.l0 { padding-left: 0; }
.l1 { padding-left: 16px; }
.l2 { padding-left: 32px; }
.l3 { padding-left: 48px; }
.l4 { padding-left: 64px; }

.arrow {
    width: 12px;
    height: 6px;
    margin: 0 8px 0 8px;
}

.noarrow {
    width: 28px;
    flex: none;
}

.node {
    width: 16px;
    height: 16px;
    margin-right: 6px;
    overflow: visible;
}

.row .node {
    width: 18px;
    height: 18px;
    margin-left: -1px;
    margin-right: 5px;
}

.row-act {
    position: absolute;
    left: 392px;
    top: 9px;
    width: 16px;
    height: 17px;
}

.selected {
    background: #245c9c;
    color: #fff;
}

.thumb {
    position: absolute;
    width: 10px;
    background: #245c9c;
    border-radius: 5px;
}

.tree-thumb {
    left: 425px;
    top: 0;
    height: 376px;
}

.type-head span {
    margin-left: 7px;
}

.type-all {
    height: 46px;
    flex: none;
    padding: 14px 0 0 13px;
}

.types {
    position: relative;
    display: flex;
    flex: none;
    padding-top: 17px;
}

.type {
    width: 100px;
    display: flex;
    flex-direction: column;
    align-items: center;
    font-size: 15px;
    line-height: 18px;
    text-align: center;
}

.type svg {
    width: 24px;
    height: 24px;
    margin-bottom: 9px;
}

.type span {
    width: 80px;
}

.type-thumb {
    left: 425px;
    top: 2px;
    height: 48px;
}

/* Editor */
.editor {
    width: 870px;
    flex: none;
    padding: 6px 6px 0;
    background: #fff;
    display: flex;
    flex-direction: column;
}

.tabs {
    height: 45px;
    display: flex;
    border-bottom: 6px solid #8a9daf;
    flex: none;
}

.tab {
    width: 312px;
    height: 39px;
    background: #f1f4f7;
    color: #777;
    display: flex;
    align-items: center;
    padding-left: 18px;
    border-right: 2px solid #d5d9dd;
}

.tab svg {
    width: 16px;
    height: 16px;
    margin-right: 6px;
}

.tab.active {
    width: 313px;
    height: 45px;
    background: #8a9daf;
    color: #111;
    border-right: none;
    padding-bottom: 6px;
    padding-left: 14px;
}

.tab.active svg {
    margin-right: 10px;
}

.edit-tools {
    height: 43px;
    background: #f1f4f7;
    flex: none;
    display: flex;
    align-items: center;
    overflow: hidden;
    padding-left: 13px;
}

.et {
    width: 26px;
    height: 30px;
    margin-right: 6px;
    display: flex;
    align-items: center;
    justify-content: center;
    flex: none;
    color: #111;
}

.et svg {
    width: 17px;
    height: 17px;
}

.et.on {
    background: #245c9c;
    color: #fff;
}

.et.off {
    color: #b4b8bb;
}

.et .pointer {
    width: 15px;
    height: 17px;
}

.et-sep {
    width: 1px;
    height: 30px;
    background: #d9dcdf;
    flex: none;
}

.es1 {
    margin: 0 4px 0 1px;
}

.es2 {
    margin: 0 4px 0 2px;
}

.es3 {
    margin: 0 5px 0 2px;
}

.es4 {
    margin: 0 6px 0 0;
}

.select {
    height: 34px;
    background: #fff;
    border-radius: 3px;
    flex: none;
    display: flex;
    align-items: center;
    padding-left: 6px;
}

.lang {
    width: 88px;
    margin-left: 0;
}

.sel-caret {
    width: 12px;
    height: 6px;
    margin-left: 20px;
}

.zoom {
    width: 60px;
    margin-left: 6px;
}

.canvas {
    flex: 1;
    position: relative;
    overflow: hidden;
    background-color: #fff;
    background-image:
        linear-gradient(to right, #eef0f2 1px, transparent 1px),
        linear-gradient(to bottom, #eef0f2 1px, transparent 1px);
    background-size: 10.400px 10.400px;
}

.frame {
    position: absolute;
    left: 21px;
    top: 93px;
    width: 825px;
    height: 617px;
    border: 2px solid #d8d8d8;
}

.shape {
    position: absolute;
    border: 1px solid #444;
}

.shape-main {
    left: 32px;
    top: 155px;
    width: 474px;
    height: 72px;
}

.shape-rot {
    left: 527px;
    top: 248px;
    width: 310px;
    height: 308px;
}

.lock {
    position: absolute;
    width: 17px;
    height: 17px;
}

.lock-a {
    left: 487px;
    top: 134px;
}

.lock-b {
    left: 818px;
    top: 228px;
}

.widget-btn {
    position: absolute;
    left: 44px;
    top: 180px;
    width: 51px;
    height: 22px;
    background: #c9c9c9;
    color: #444;
    font: 13px/22px Lato, sans-serif;
    text-align: center;
}

.handle {
    position: absolute;
    width: 9px;
    height: 9px;
    border: 1.500px solid #5d8cba;
    background: rgba(255, 255, 255, .35);
}

.h1 { left: 39px; top: 175px; }
.h2 { left: 65px; top: 175px; }
.h3 { left: 91px; top: 175px; }
.h4 { left: 39px; top: 187px; }
.h5 { left: 91px; top: 187px; }
.h6 { left: 39px; top: 198px; }
.h7 { left: 65px; top: 198px; }
.h8 { left: 91px; top: 198px; }

.widget-label {
    position: absolute;
    left: 105px;
    top: 165px;
    width: 402px;
    margin: 0;
    color: #555;
    font: 12.560px/15px Lato, sans-serif;
}

/* Properties */
.props {
    width: 611px;
    flex: none;
    background: #f1f4f7;
    position: relative;
    overflow: hidden;
}

.sort-on {
    position: absolute;
    left: 408px;
    top: 4px;
    width: 30px;
    height: 30px;
    background: #245c9c;
    display: flex;
    flex-direction: column;
    align-items: flex-end;
    justify-content: center;
    gap: 3px;
    padding-right: 7px;
}

.sort-on i {
    height: 2px;
    width: 15px;
    background: #fff;
}

.sort-on i:nth-child(2) {
    width: 11px;
}

.sort-on i:nth-child(3) {
    width: 6px;
}

.pi-az {
    position: absolute;
    left: 449px;
    top: 9px;
    width: 17px;
    height: 20px;
}

.pi-plus {
    left: 499px;
}

.pi-trash {
    left: 534px;
}

.pi-copy {
    left: 582px;
}

.identity {
    height: 70px;
    border-bottom: 1px solid #d9dcdf;
    display: flex;
    align-items: center;
    position: relative;
}

.id-icon {
    width: 27px;
    height: 30px;
    margin-left: 11px;
}

.id-names {
    margin-left: 27px;
}

.id-names div {
    height: 35px;
    display: flex;
    align-items: center;
}

.id-key {
    width: 74px;
    text-align: right;
    padding-right: 13px;
    flex: none;
    margin-left: -21px;
}

.id-act {
    margin-left: auto;
    margin-right: 20px;
    width: 20px;
    height: 22px;
}

.prop {
    height: 35px;
    display: flex;
    align-items: center;
    position: relative;
}

.key {
    width: 275px;
    padding-left: 30px;
    flex: none;
}

.val {
    flex: none;
}

.it {
    font-style: italic;
    color: #777;
}

.link {
    color: #22aee5;
}

.group {
    height: 35px;
    background: #dadde0;
    display: flex;
    align-items: center;
}

.dash {
    width: 16px;
    height: 2px;
    background: #111;
    margin-left: 13px;
    margin-right: 12px;
}

.prop-cut {
    height: 32px;
    padding-top: 3px;
}

.swatch {
    position: absolute;
    left: 567px;
    top: 4px;
    width: 22px;
    height: 22px;
    background: #000;
    border-radius: 2px;
}

.events-head {
    height: 38px;
    background: #dadde0;
    display: flex;
    align-items: center;
    padding-left: 6px;
    position: relative;
}

.events-head svg {
    width: 16px;
    height: 16px;
    position: absolute;
    left: 583px;
    top: 11px;
}

.ev {
    height: 35px;
    display: flex;
    align-items: center;
    position: relative;
    white-space: nowrap;
    padding-left: 52px;
}

.ev .ev-a1 {
    position: absolute;
    left: 9px;
    top: 15px;
    margin: 0;
}

.bolt {
    width: 16px;
    height: 16px;
    position: absolute;
    left: 31px;
    top: 9px;
}

.ev-plus {
    position: absolute;
    left: 588px;
    top: 10px;
    width: 15px;
    height: 15px;
}

.method-box {
    position: relative;
}

.method-box::after {
    content: "";
    position: absolute;
    left: 0;
    right: 1px;
    top: -1px;
    bottom: 0;
    border: 5px solid #f58229;
    pointer-events: none;
}

.m1 {
    padding-left: 46px;
}

.m1 .arrow {
    position: absolute;
    left: 25px;
    top: 15px;
    margin: 0;
}

.m2 {
    padding-left: 62px;
}

.m2 .arrow {
    position: absolute;
    left: 40px;
    top: 15px;
    margin: 0;
}

.m3 {
    padding-left: 78px;
}

.ev-val {
    position: absolute;
    left: 280px;
    top: 0;
    line-height: 35px;
}

.ev-clip {
    width: 330px;
    overflow: hidden;
    letter-spacing: -.1px;
}

.delta {
    left: 239px;
    width: 367px;
    padding-left: 41px;
    background: #245c9c;
    color: #fff;
}

.ev-trash {
    position: absolute;
    left: 587px;
    top: 9px;
    width: 16px;
    height: 18px;
}

.ev-link {
    position: absolute;
    left: 248px;
    top: 9px;
    width: 18px;
    height: 18px;
    color: #22aee5;
}

.prop-thumb {
    left: 600px;
    top: 191px;
    width: 9px;
    height: 166px;
}
```
